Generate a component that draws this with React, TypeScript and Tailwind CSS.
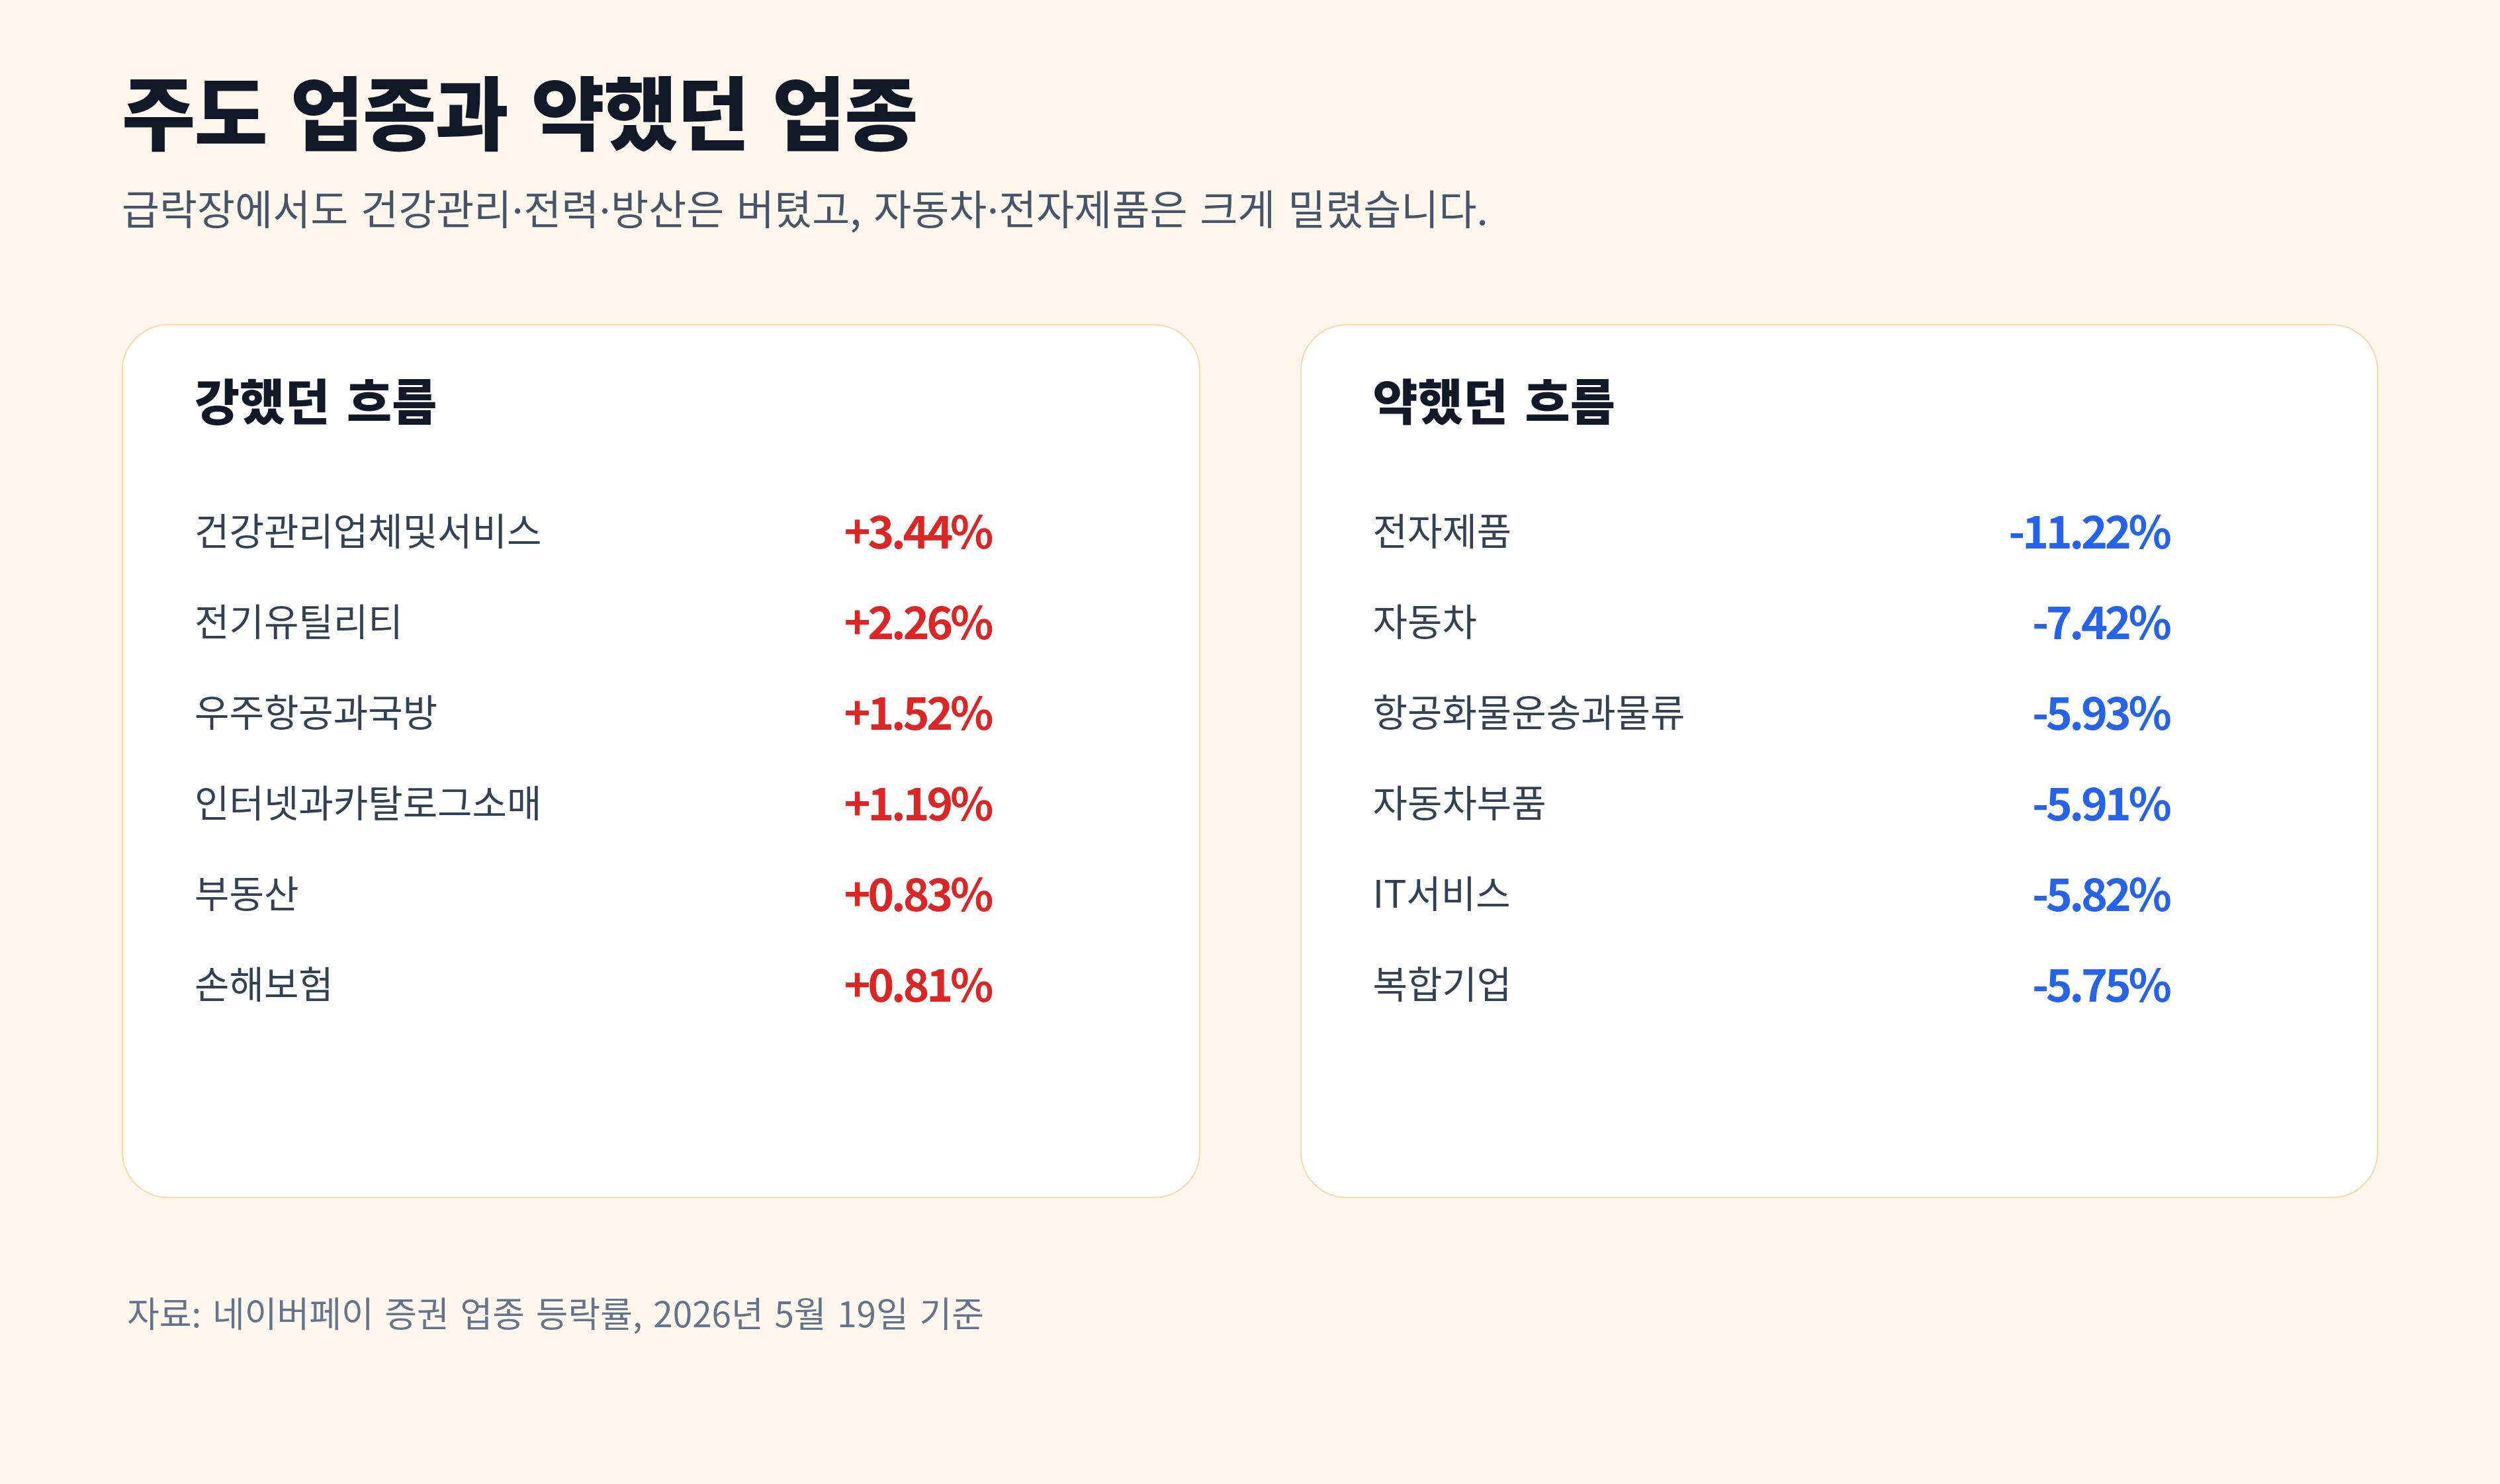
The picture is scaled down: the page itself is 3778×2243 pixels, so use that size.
import React from "react";

type Item = { name: string; value: string };

const strong: Item[] = [
  { name: "건강관리업체및서비스", value: "+3.44%" },
  { name: "전기유틸리티", value: "+2.26%" },
  { name: "우주항공과국방", value: "+1.52%" },
  { name: "인터넷과카탈로그소매", value: "+1.19%" },
  { name: "부동산", value: "+0.83%" },
  { name: "손해보험", value: "+0.81%" },
];

const weak: Item[] = [
  { name: "전자제품", value: "-11.22%" },
  { name: "자동차", value: "-7.42%" },
  { name: "항공화물운송과물류", value: "-5.93%" },
  { name: "자동차부품", value: "-5.91%" },
  { name: "IT서비스", value: "-5.82%" },
  { name: "복합기업", value: "-5.75%" },
];

function Dot() {
  return <span className="font-['Inter',sans-serif]">·</span>;
}

function Card({ title, items, up }: { title: string; items: Item[]; up: boolean }) {
  return (
    <div className="h-[1321px] rounded-[70px] border-2 border-[#fed7aa] bg-white pl-[108px] pt-[74px]">
      <h2 className="text-[74px] leading-none font-black [word-spacing:0.12em] text-[#111827]">{title}</h2>
      <div className="mt-[91px] flex w-[1203px] flex-col">
        {items.map((it) => (
          <div key={it.name} className="flex h-[137px] items-center justify-between">
            <span className="text-[57px] leading-none font-normal text-[#334155]">{it.name}</span>
            <span
              className={
                up
                  ? "text-[68px] leading-none font-bold tracking-[-0.065em] text-[#dc2626]"
                  : "text-[68px] leading-none font-bold tracking-[-0.065em] text-[#2563eb]"
              }
            >
              {it.value}
            </span>
          </div>
        ))}
      </div>
    </div>
  );
}

export default function App() {
  return (
    <div className="min-h-screen w-full bg-[#fff7ed] px-[184px] pt-[104px] pb-[120px] font-['Noto_Sans_CJK_KR','Noto_Sans',sans-serif]">
      <h1 className="text-[121px] leading-none font-black tracking-[-0.015em] [word-spacing:0.08em] text-[#111827]">
        주도 업종과 약했던 업종
      </h1>
      <p className="mt-[57px] h-[61px] overflow-visible text-[62px] leading-none font-normal [word-spacing:0.08em] text-[#475569]">
        급락장에서도 건강관리<Dot />전력<Dot />방산은 버텼고, 자동차<Dot />전자제품은 크게 밀렸습니다.
      </p>
      <div className="mt-[147px] grid grid-cols-2 gap-[151px]">
        <Card title="강했던 흐름" items={strong} up={true} />
        <Card title="약했던 흐름" items={weak} up={false} />
      </div>
      <p className="mt-[146px] ml-[8px] text-[53px] leading-none font-normal [word-spacing:0.09em] text-[#64748b]">
        자료: 네이버페이 증권 업종 등락률, 2026년 5월 19일 기준
      </p>
    </div>
  );
}
